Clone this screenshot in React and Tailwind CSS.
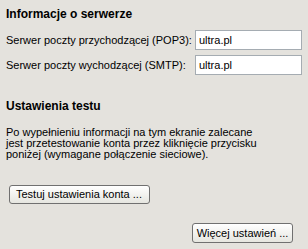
export default function App() {
  // okno ustawień konta pocztowego w stylu Windows XP
  const fields = [
    { label: "Serwer poczty przychodzącej (POP3):", value: "ultra.pl" },
    { label: "Serwer poczty wychodzącej (SMTP):", value: "ultra.pl" },
  ];

  return (
    <div
      className="w-[308px] h-[249px] bg-[#e4e2dd] text-black text-[11px] leading-[13px] pl-[6px] pr-[6px] pt-[7px] overflow-hidden"
      style={{ fontFamily: "Tahoma, 'Liberation Sans', sans-serif" }}
    >
      <h2 className="font-bold text-[12px] leading-[14px]">Informacje o serwerze</h2>

      <div className="mt-[9px] flex flex-col gap-[5px]">
        {fields.map((f) => (
          <div key={f.label} className="flex items-center justify-between">
            <span>{f.label}</span>
            <div className="w-[107px] h-[20px] bg-white border border-[#a5acb2] flex items-center pl-[3px]">
              {f.value}
            </div>
          </div>
        ))}
      </div>

      <h2 className="mt-[24px] font-bold text-[12px] leading-[14px]">Ustawienia testu</h2>

      <p className="mt-[14px] leading-[11px]">
        Po wypełnieniu informacji na tym ekranie zalecane
        <br />
        jest przetestowanie konta przez kliknięcie przycisku
        <br />
        poniżej (wymagane połączenie sieciowe).
      </p>

      <div className="mt-[25px] pl-[3px]">
        <button className="w-[141px] h-[19px] rounded-[3px] border border-[#707070] bg-gradient-to-b from-white to-[#e6e6e0] text-left pl-[6px] leading-[17px]">
          Testuj ustawienia konta ...
        </button>
      </div>

      <div className="mt-[19px] flex justify-end pr-[9px]">
        <button className="w-[101px] h-[20px] rounded-[3px] border border-[#707070] bg-gradient-to-b from-white to-[#e6e6e0] leading-[18px]">
          Więcej ustawień ...
        </button>
      </div>
    </div>
  );
}
